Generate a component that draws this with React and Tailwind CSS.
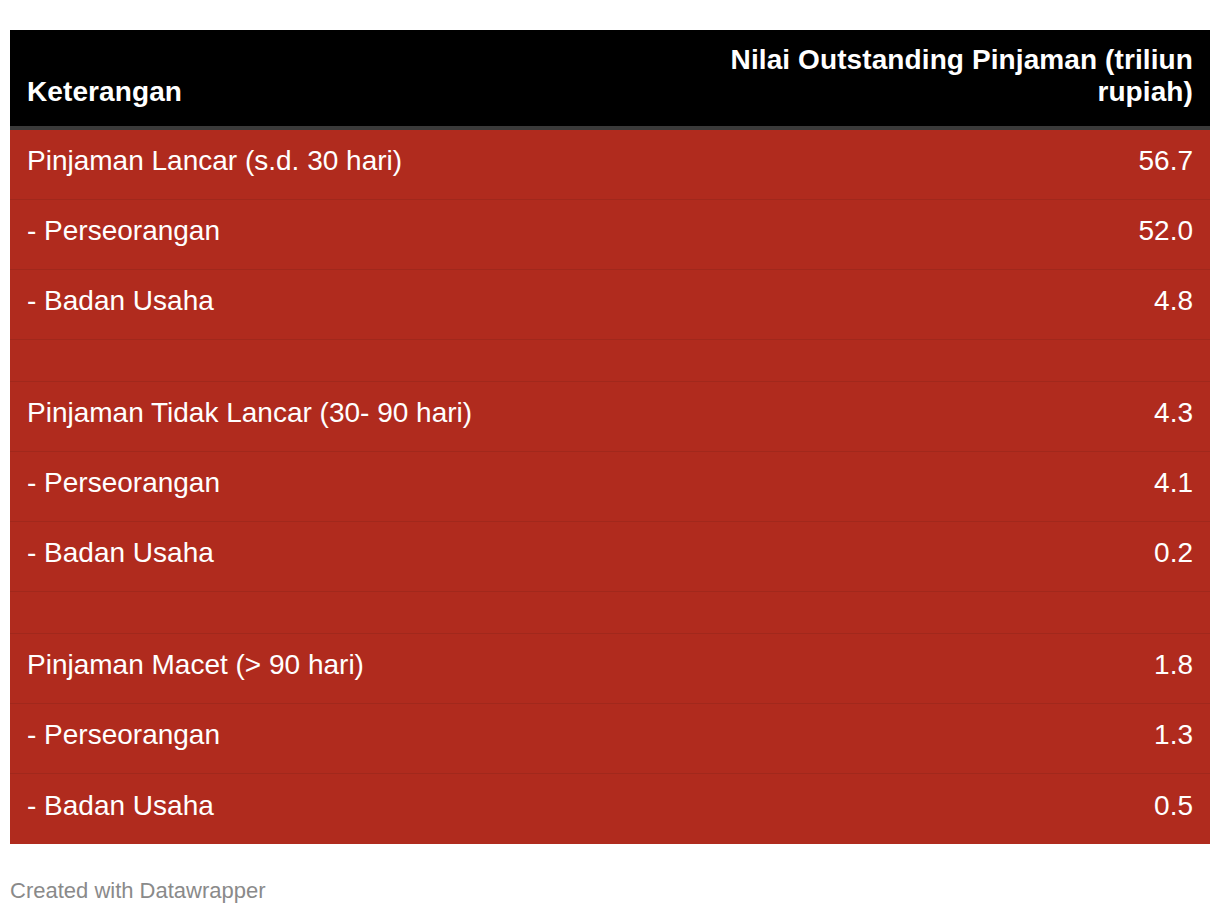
const rows = [
  { label: 'Pinjaman Lancar (s.d. 30 hari)', value: '56.7' },
  { label: '- Perseorangan', value: '52.0' },
  { label: '- Badan Usaha', value: '4.8' },
  { empty: true },
  { label: 'Pinjaman Tidak Lancar (30- 90 hari)', value: '4.3' },
  { label: '- Perseorangan', value: '4.1' },
  { label: '- Badan Usaha', value: '0.2' },
  { empty: true },
  { label: 'Pinjaman Macet (> 90 hari)', value: '1.8' },
  { label: '- Perseorangan', value: '1.3' },
  { label: '- Badan Usaha', value: '0.5' },
];

export default function App() {
  return (
    <div className="min-h-screen bg-white px-[10px] pt-[30px] font-['Liberation_Sans',Arial,sans-serif]">
      <div className="w-[1200px]">
        {/* header */}
        <div className="flex items-end bg-black border-b-4 border-[#3a3a3a] px-[17px] pt-[14px] pb-[18px] text-white font-bold text-[28px] leading-[32px] tracking-[0.1px]">
          <div className="flex-1">Keterangan</div>
          <div className="w-[500px] text-right">Nilai Outstanding Pinjaman (triliun rupiah)</div>
        </div>

        {/* body */}
        <div className="bg-[#b02b1e] text-white text-[28px]">
          {rows.map((r, i) =>
            r.empty ? (
              <div key={i} className="h-[42px] border-b border-[#a1281c]" />
            ) : (
              <div
                key={i}
                className={`flex items-center h-[70px] px-[17px] pb-[7px] ${i === rows.length - 1 ? '' : 'border-b border-[#a1281c]'}`}
              >
                <div className="flex-1">{r.label}</div>
                <div className="text-right">{r.value}</div>
              </div>
            )
          )}
        </div>

        <div className="mt-[30px] text-[22px] text-[#8a8a8a]">Created with Datawrapper</div>
      </div>
    </div>
  );
}
